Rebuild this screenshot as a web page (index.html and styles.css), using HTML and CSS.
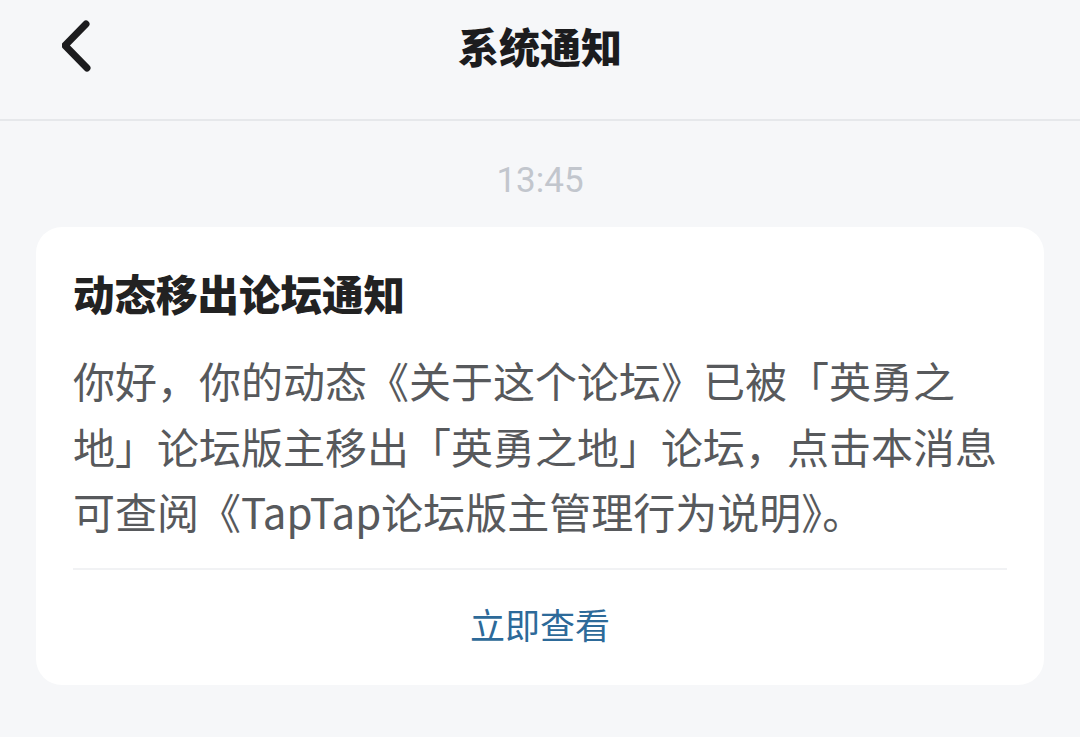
FILE: index.html
```html
<!DOCTYPE html>
<html lang="zh-CN">
<head>
<meta charset="utf-8">
<title>系统通知</title>
<link rel="stylesheet" href="styles.css">
</head>
<body>
<header class="header">
  <div class="header-row">
    <button class="back" aria-label="返回">
      <svg width="40" height="60" viewBox="0 0 40 60">
        <path d="M24 4 L3 25.5 L25 48" fill="none" stroke="#1c1c1e" stroke-width="7" stroke-linecap="round" stroke-linejoin="round"/>
      </svg>
    </button>
    <h1 class="title">系统通知</h1>
  </div>
</header>
<main class="content">
  <div class="time">13:45</div>
  <section class="card">
    <h2 class="card-title">动态移出论坛通知</h2>
    <p class="card-body">你好，你的动态《关于这个论坛》已被「英勇之地」论坛版主移出「英勇之地」论坛，点击本消息可查阅《TapTap论坛版主管理行为说明》。</p>
    <div class="card-action">立即查看</div>
  </section>
</main>
</body>
</html>
```

FILE: styles.css
```css
* { box-sizing: border-box; }
html, body {
  margin: 0;
  padding: 0;
  background: #f6f7f9;
  font-family: "Noto Sans CJK SC", "Noto Sans", sans-serif;
}
body {
  width: 1080px;
  height: 737px;
  overflow: hidden;
}
.header {
  padding-bottom: 26px;
  border-bottom: 2px solid #e6e8eb;
}
.header-row {
  position: relative;
  height: 93px;
  display: flex;
  align-items: center;
  justify-content: center;
  padding-bottom: 4px;
}
.back {
  position: absolute;
  left: 62px;
  top: 20px;
  padding: 0;
  border: 0;
  background: none;
  display: flex;
}
.title {
  margin: 0;
  font-size: 41px;
  font-weight: 900;
  color: #1c1c1e;
  line-height: 50px;
}
.content {
  padding: 0 36px;
}
.time {
  padding-top: 40px;
  text-align: center;
  font-family: Roboto, "Noto Sans", sans-serif;
  font-size: 35px;
  line-height: 40px;
  color: #c2c6cd;
}
.card {
  margin-top: 26px;
  background: #ffffff;
  border-radius: 26px;
  padding: 41px 37px 0;
}
.card-title {
  margin: 0;
  font-size: 41.5px;
  font-weight: 900;
  line-height: 50px;
  color: #222222;
}
.card-body {
  margin: 29px 0 0;
  font-size: 42px;
  line-height: 65.5px;
  color: #57595c;
  padding-bottom: 24px;
  border-bottom: 2px solid #f1f2f4;
}
.card-action {
  height: 115px;
  display: flex;
  align-items: center;
  justify-content: center;
  padding-bottom: 8px;
  font-size: 35px;
  color: #2d6a99;
}
```
